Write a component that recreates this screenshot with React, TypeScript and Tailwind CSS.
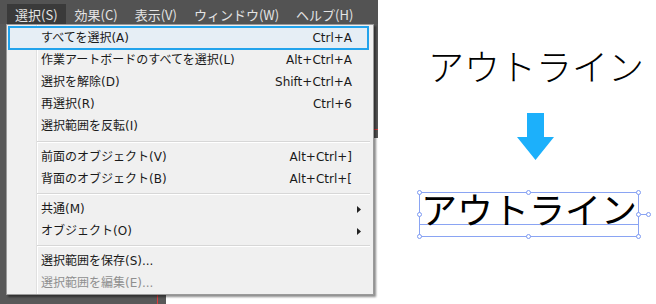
import React from "react";

type Item =
  | { sep: true }
  | { sep?: false; label: string; sc?: string; hl?: boolean; sub?: boolean; disabled?: boolean; };

const items: Item[] = [
  { label: "すべてを選択(A)", sc: "Ctrl+A", hl: true },
  { label: "作業アートボードのすべてを選択(L)", sc: "Alt+Ctrl+A" },
  { label: "選択を解除(D)", sc: "Shift+Ctrl+A" },
  { label: "再選択(R)", sc: "Ctrl+6" },
  { label: "選択範囲を反転(I)" },
  { sep: true },
  { label: "前面のオブジェクト(V)", sc: "Alt+Ctrl+]" },
  { label: "背面のオブジェクト(B)", sc: "Alt+Ctrl+[" },
  { sep: true },
  { label: "共通(M)", sub: true },
  { label: "オブジェクト(O)", sub: true },
  { sep: true },
  { label: "選択範囲を保存(S)..." },
  { label: "選択範囲を編集(E)...", disabled: true },
];

const menus = ["選択(S)", "効果(C)", "表示(V)", "ウィンドウ(W)", "ヘルプ(H)"];

function Handle({ cls }: { cls: string }) {
  return <div className={`absolute w-[5px] h-[5px] rounded-full border border-[#7d9af2] bg-white ${cls}`} />;
}

export default function App() {
  return (
    <div className="w-[656px] h-[304px] flex bg-white overflow-hidden font-['Noto_Sans_CJK_JP',sans-serif]">
      {/* Left: Illustrator window */}
      <div className="relative w-[378px] h-full flex flex-col bg-[#585858]">
        <div className="h-[24px] flex items-end bg-[#535353] pl-[7px] gap-[1px]">
          {menus.map((m, i) => (
            <div
              key={m}
              className={`h-[20px] px-[8px] flex items-center text-[13px] leading-none text-[#e4e4e4] ${i === 0 ? "bg-[#3a3a3a]" : ""}`}
            >
              {m}
            </div>
          ))}
        </div>
        <div className="relative flex-1">
          {/* bleed lines & artboard */}
          <div className="absolute left-[157px] top-[105px] right-0 bottom-0 border-l border-t border-[#e03a3a]" />
          <div className="absolute left-[166px] top-[114px] right-0 bottom-0 bg-white" />
        </div>

        {/* Dropdown menu */}
        <div className="absolute left-[6px] top-[24px] w-[368px] h-[271px] border border-[#9a9a9a] bg-[#f0f0f0] pt-[2px] shadow-[2px_2px_2px_rgba(0,0,0,0.45)] font-['DejaVu_Sans','Noto_Sans_CJK_JP',sans-serif]">
          <div className="absolute left-[29px] top-0 bottom-0 w-px bg-[#e0e0e0]" />
          <div className="absolute left-[30px] top-0 bottom-0 w-px bg-white" />
          {items.map((it, i) =>
            it.sep ? (
              <div key={i} className={`relative flex flex-col justify-center ${i === 5 ? "h-[9px]" : "h-[8px]"} ml-[30px] mr-[3px]`}>
                <div className="h-px bg-[#d7d7d7]" />
                <div className="h-px bg-white" />
              </div>
            ) : (
              <div
                key={i}
                className={`relative h-[22px] ml-[2px] mr-[5px] pl-[32px] flex items-center text-[12px] leading-none ${
                  it.disabled ? "text-[#8f8f8f]" : "text-[#1a1a1a]"
                } ${it.hl ? "bg-[#e6eef5] outline-2 outline-[#22a3ec] outline-offset-[-1px]" : ""}`}
              >
                <span className="flex-1">{it.label}</span>
                {it.sc && <span>{it.sc}</span>}
                <span className="w-[16px] h-full flex items-center pl-[5px]">
                  {it.sub && (
                    <svg width="4" height="7" viewBox="0 0 4 7">
                      <path d="M0 0 L4 3.5 L0 7 Z" fill="#222" />
                    </svg>
                  )}
                </span>
              </div>
            )
          )}
        </div>
      </div>

      {/* Right: illustration */}
      <div className="flex-1 flex flex-col items-start bg-white">
        <div className="mt-[47px] ml-[50px] text-[36px] leading-none font-light text-black whitespace-nowrap">アウトライン</div>
        <svg className="mt-[30px] ml-[139px]" width="38" height="48" viewBox="0 0 38 48">
          <path d="M10 0 H27 V24 H37 L18.5 47 L0 24 H10 Z" fill="#1cb0fb" />
        </svg>
        <div className="relative mt-[31px] ml-[41px] w-[220px] h-[45px] border border-[#8aa4f3]">
          <div className="absolute left-0 right-0 top-[31px] h-px bg-[#8aa4f3]" />
          <div className="relative -mt-[3px] pl-[1px] text-[36px] leading-none font-normal text-black whitespace-nowrap">アウトライン</div>
          <Handle cls="left-[-3px] top-[-3px]" />
          <Handle cls="left-[106px] top-[-3px]" />
          <Handle cls="right-[-3px] top-[-3px]" />
          <Handle cls="left-[-3px] top-[19px]" />
          <Handle cls="right-[-3px] top-[19px]" />
          <Handle cls="left-[-3px] bottom-[-3px]" />
          <Handle cls="left-[106px] bottom-[-3px]" />
          <Handle cls="right-[-3px] bottom-[-3px]" />
          <div className="absolute left-[221px] top-[21px] w-[6px] h-px bg-[#8aa4f3]" />
          <Handle cls="left-[226px] top-[19px]" />
        </div>
      </div>
    </div>
  );
}
